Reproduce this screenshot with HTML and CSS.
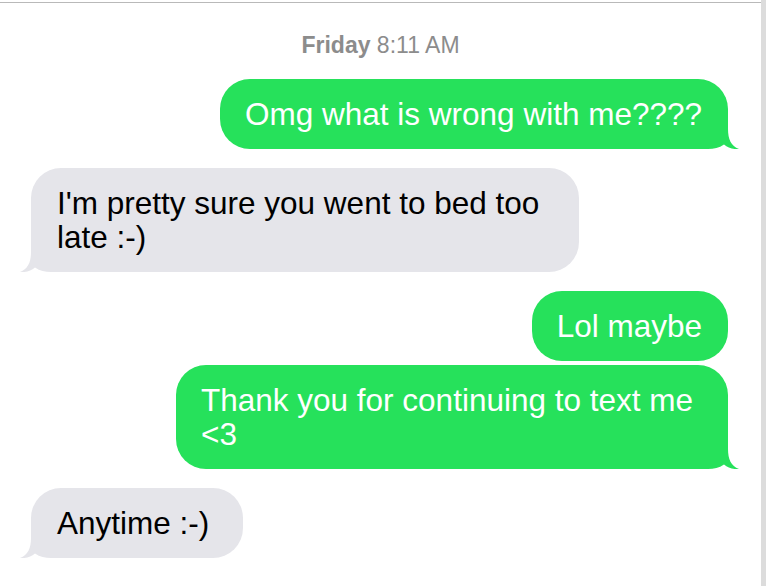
FILE: index.html
```html
<!DOCTYPE html>
<html lang="en">
<head>
<meta charset="utf-8">
<title>Messages</title>
<link rel="stylesheet" href="styles.css">
</head>
<body>
<div class="app">
  <main class="screen">
    <div class="stamp"><span class="day">Friday</span> 8:11 AM</div>

    <div class="row sent first">
      <div class="bubble">Omg what is wrong with me????<svg class="tail" viewBox="0 0 41 32" width="41" height="32"><path d="M0 0 L30 0 L30 12 C30 22 33 29 41 32 C35 32.5 30 31 26 27.5 C21 31 16 32 10 32 L0 32 Z" fill="currentColor"/></svg></div>
    </div>

    <div class="row received">
      <div class="bubble">I'm pretty sure you went to bed too late :-)<svg class="tail" viewBox="0 0 41 32" width="41" height="32"><path d="M0 0 L30 0 L30 12 C30 22 33 29 41 32 C35 32.5 30 31 26 27.5 C21 31 16 32 10 32 L0 32 Z" fill="currentColor"/></svg></div>
    </div>

    <div class="row sent">
      <div class="bubble">Lol maybe</div>
    </div>

    <div class="row sent cont">
      <div class="bubble">Thank you for continuing to text me &lt;3<svg class="tail" viewBox="0 0 41 32" width="41" height="32"><path d="M0 0 L30 0 L30 12 C30 22 33 29 41 32 C35 32.5 30 31 26 27.5 C21 31 16 32 10 32 L0 32 Z" fill="currentColor"/></svg></div>
    </div>

    <div class="row received">
      <div class="bubble">Anytime :-)<svg class="tail" viewBox="0 0 41 32" width="41" height="32"><path d="M0 0 L30 0 L30 12 C30 22 33 29 41 32 C35 32.5 30 31 26 27.5 C21 31 16 32 10 32 L0 32 Z" fill="currentColor"/></svg></div>
    </div>
  </main>
  <div class="scrollbar"></div>
</div>
</body>
</html>
```

FILE: styles.css
```css
html, body {
  margin: 0;
  padding: 0;
  background: #ffffff;
}

body {
  font-family: "Liberation Sans", Arial, Helvetica, sans-serif;
}

.app {
  display: flex;
  width: 766px;
  height: 586px;
  overflow: hidden;
}

.screen {
  flex: 1;
  margin-top: 2px;
  border-top: 1px solid #b9b9b9;
  padding-top: 29px;
  display: flex;
  flex-direction: column;
}

.scrollbar {
  width: 5px;
  background: #dcdcdc;
}

.stamp {
  text-align: center;
  font-size: 23px;
  line-height: 27px;
  color: #8c8c8c;
}

.stamp .day {
  font-weight: bold;
}

.row {
  display: flex;
  padding: 0 33px 0 31px;
  margin-top: 19px;
}

.row.first {
  margin-top: 20px;
}

.row.cont {
  margin-top: 4px;
}

.row.sent {
  justify-content: flex-end;
}

.row.received {
  justify-content: flex-start;
}

.bubble {
  position: relative;
  z-index: 0;
  box-sizing: border-box;
  max-width: 552px;
  padding: 18px 26px 18px 25px;
  border-radius: 30px;
  font-size: 31.5px;
  line-height: 34px;
}

.sent .bubble {
  background: #26e15b;
  color: #ffffff;
}

.received .bubble {
  max-width: 548px;
  padding: 18px 34px 18px 26px;
  background: #e5e5ea;
  color: #000000;
}

.tail {
  position: absolute;
  bottom: 0;
  z-index: -1;
  display: block;
}

.sent .tail {
  right: -11px;
  color: #26e15b;
}

.received .tail {
  left: -11px;
  transform: scaleX(-1);
  color: #e5e5ea;
}
```
